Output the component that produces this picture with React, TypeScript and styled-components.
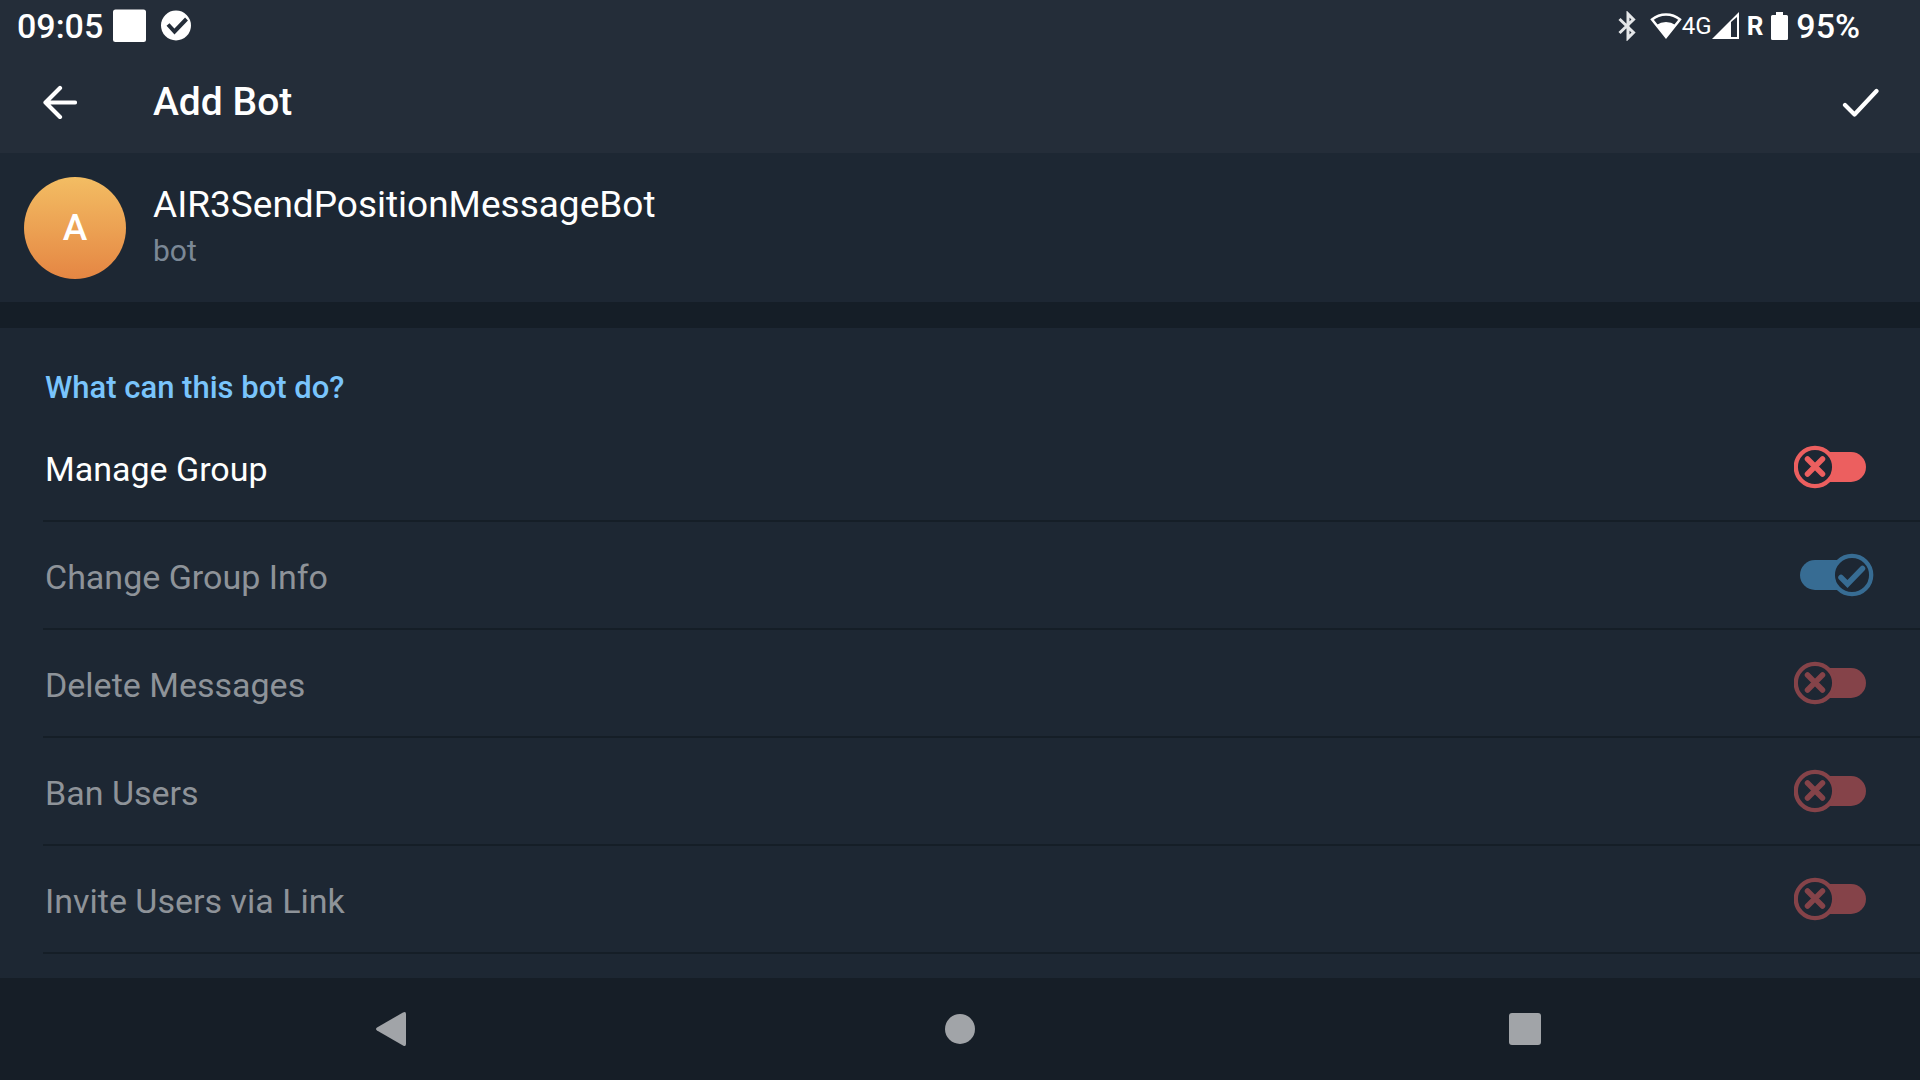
import React, { useState } from "react";
import styled, { createGlobalStyle } from "styled-components";

const color = {
  bar: "#242d39",
  surface: "#1d2733",
  ground: "#151e27",
  nav: "#161e27",
  accent: "#79c4fc",
  muted: "#7b8896",
  on: "#376c93",
  off: "#ec5f5f",
  offDim: "#854349",
  navIcon: "#a1a4a8",
};

const GlobalStyle = createGlobalStyle`
  * { box-sizing: border-box; }
  body {
    margin: 0;
    background: ${color.surface};
    color: #fff;
    font-family: Roboto, "Noto Sans", sans-serif;
  }
  h1, h2, p, ul { margin: 0; padding: 0; }
  button { border: 0; padding: 0; background: none; color: inherit; font: inherit; }
  svg { display: block; flex: none; }
`;

const Page = styled.div`
  display: flex;
  flex-direction: column;
  min-height: 100vh;
`;

const Header = styled.header`
  background: ${color.bar};
`;

const StatusBar = styled.div`
  display: flex;
  align-items: center;
  justify-content: space-between;
  height: 51px;
  padding: 0 60px 0 17px;
  font-size: 34px;
  font-weight: 500;
`;

const StatusGroup = styled.div<{ $gap: number }>`
  display: flex;
  align-items: center;
  gap: ${(p) => p.$gap}px;
`;

const Network = styled.span`
  font-size: 24px;
  font-weight: 400;
`;

const Roaming = styled.span`
  font-size: 26px;
  font-weight: 700;
`;

const Toolbar = styled.div`
  display: flex;
  align-items: center;
  height: 102px;
  padding: 0 36px;
`;

const IconButton = styled.button`
  display: grid;
  place-items: center;
  width: 48px;
  height: 48px;
`;

const Title = styled.h1`
  flex: 1;
  padding-left: 69px;
  font-size: 39px;
  line-height: 44px;
  font-weight: 500;
`;

const Profile = styled.section`
  display: flex;
  align-items: center;
  gap: 27px;
  height: 149px;
  padding: 0 24px;
`;

const Avatar = styled.div`
  display: grid;
  place-items: center;
  width: 102px;
  height: 102px;
  border-radius: 50%;
  background: linear-gradient(#f3bd63, #e58643);
  font-size: 37px;
  font-weight: 500;
`;

const Identity = styled.div`
  padding-bottom: 2px;
`;

const Name = styled.p`
  font-size: 37px;
  line-height: 48px;
`;

const Kind = styled.p`
  color: ${color.muted};
  font-size: 30px;
  line-height: 44px;
`;

const Separator = styled.div`
  height: 26px;
  background: ${color.ground};
`;

const Rights = styled.section`
  flex: 1;
  padding-top: 36px;
`;

const Heading = styled.h2`
  padding: 0 45px;
  height: 50px;
  color: ${color.accent};
  font-size: 31px;
  line-height: 48px;
  font-weight: 500;
`;

const List = styled.ul`
  list-style: none;
  padding-left: 43px;
`;

const Row = styled.li`
  border-bottom: 2px solid ${color.ground};
`;

const RowLabel = styled.label<{ $dim: boolean }>`
  display: flex;
  align-items: center;
  justify-content: space-between;
  height: 106px;
  padding: 0 46px 0 2px;
  color: ${(p) => (p.$dim ? "#8e9399" : "#fff")};
  font-size: 34px;
`;

const RowText = styled.span`
  padding-top: 4px;
`;

const SwitchBox = styled.span`
  display: grid;
  > * {
    grid-area: 1 / 1;
  }
`;

const SwitchInput = styled.input`
  width: 80px;
  height: 42px;
  margin: 0;
  opacity: 0;
`;

const NavBar = styled.nav`
  display: grid;
  grid-template-columns: repeat(3, 1fr);
  justify-items: center;
  align-items: center;
  height: 102px;
  padding: 0 112px;
  background: ${color.nav};
`;

function SwitchArt({ on, dim }: { on: boolean; dim: boolean }) {
  const c = on ? color.on : dim ? color.offDim : color.off;
  return (
    <svg width="80" height="44" viewBox="0 -0.5 80 44" fill="none" aria-hidden="true">
      <rect x={on ? 6 : 20} y="6.500" width="52" height="30" rx="15" fill={c} />
      <circle cx={on ? 58 : 21} cy="21.500" r="19.200" fill={color.surface} stroke={c} strokeWidth="4.300" />
      <path
        d={on ? "M47 24.500l6.500 6.500L68.500 15.500" : "M13.500 14l15 15M28.500 14L13.500 29"}
        stroke={c}
        strokeWidth="5.500"
        strokeLinecap="round"
        transform="translate(0 -0.5)"
      />
    </svg>
  );
}

type Right = { id: string; label: string; on: boolean; locked: boolean };

const initialRights: Right[] = [
  { id: "manage", label: "Manage Group", on: false, locked: false },
  { id: "info", label: "Change Group Info", on: true, locked: true },
  { id: "delete", label: "Delete Messages", on: false, locked: true },
  { id: "ban", label: "Ban Users", on: false, locked: true },
  { id: "invite", label: "Invite Users via Link", on: false, locked: true },
];

export default function App() {
  const [rights, setRights] = useState(initialRights);
  const toggle = (id: string) =>
    setRights((all) => all.map((r) => (r.id === id ? { ...r, on: !r.on } : r)));

  return (
    <Page>
      <GlobalStyle />
      <Header>
        <StatusBar>
          <StatusGroup $gap={10}>
            <span>09:05</span>
            <svg width="80" height="34" viewBox="0 0 80 34" aria-hidden="true">
              <rect y="0.500" width="33" height="32.500" rx="2.500" fill="#fff" />
              <circle cx="63" cy="16.500" r="15" fill="#fff" />
              <path d="M55 15.500l6.500 7 12-12.500" fill="none" stroke={color.bar} strokeWidth="4" />
            </svg>
          </StatusGroup>
          <StatusGroup $gap={8}>
            <StatusGroup $gap={0}>
              <svg width="64" height="30" viewBox="0 0 64 30" fill="none" aria-hidden="true">
                <path
                  d="M1.500 8l14 13.500L10 27V3l5.500 5.500-14 13.500"
                  stroke="#e4e6e8"
                  strokeWidth="3"
                />
                <path d="M34 8.500a22 22 0 0 1 28 0L48 26z" stroke="#fff" strokeWidth="2.500" />
                <path d="M38.500 14a17 17 0 0 1 19 0L48 26z" fill="#fff" />
              </svg>
              <Network>4G</Network>
              <svg width="27" height="28" viewBox="0 0 27 28" aria-hidden="true">
                <path d="M0 27L27 0v27zM19 10v15H25V5z" fill="#fff" fillRule="evenodd" />
              </svg>
            </StatusGroup>
            <Roaming>R</Roaming>
            <svg width="17" height="28" viewBox="0 0 17 28" aria-hidden="true">
              <path
                d="M5 0h7v3h3.500q1.500 0 1.500 1.500v22q0 1.500-1.500 1.500h-14q-1.500 0-1.500-1.500v-22q0-1.500 1.500-1.500H5z"
                fill="#fff"
              />
            </svg>
            <span>95%</span>
          </StatusGroup>
        </StatusBar>
        <Toolbar>
          <IconButton type="button" aria-label="Back">
            <svg width="34" height="34" viewBox="0 0 34 34" fill="none" aria-hidden="true">
              <path
                d="M32 17.500H2.500M17 3L2.500 17.500 17 32"
                stroke="#fff"
                strokeWidth="4.200"
                strokeLinecap="round"
                strokeLinejoin="round"
              />
            </svg>
          </IconButton>
          <Title>Add Bot</Title>
          <IconButton type="button" aria-label="Done">
            <svg width="38" height="30" viewBox="0 0 38 30" fill="none" aria-hidden="true">
              <path
                d="M4 18l9.500 9.500L35.500 4"
                stroke="#fff"
                strokeWidth="4.200"
                strokeLinecap="round"
                strokeLinejoin="round"
              />
            </svg>
          </IconButton>
        </Toolbar>
      </Header>

      <Profile>
        <Avatar>A</Avatar>
        <Identity>
          <Name>AIR3SendPositionMessageBot</Name>
          <Kind>bot</Kind>
        </Identity>
      </Profile>
      <Separator />

      <Rights>
        <Heading>What can this bot do?</Heading>
        <List>
          {rights.map((r) => (
            <Row key={r.id}>
              <RowLabel $dim={r.locked} htmlFor={r.id}>
                <RowText>{r.label}</RowText>
                <SwitchBox>
                  <SwitchArt on={r.on} dim={r.locked} />
                  <SwitchInput
                    id={r.id}
                    type="checkbox"
                    role="switch"
                    checked={r.on}
                    disabled={r.locked}
                    onChange={() => toggle(r.id)}
                  />
                </SwitchBox>
              </RowLabel>
            </Row>
          ))}
        </List>
      </Rights>

      <NavBar>
        <IconButton type="button" aria-label="System back">
          <svg width="40" height="36" viewBox="0 0 40 36" aria-hidden="true">
            <path
              d="M2 19.500q-2-1.500 0-3L28 1.500q3-1.500 3 1.500v30q0 3-3 1.500z"
              fill={color.navIcon}
            />
          </svg>
        </IconButton>
        <IconButton type="button" aria-label="Home">
          <svg width="30" height="30" viewBox="0 0 30 30" aria-hidden="true">
            <circle cx="15" cy="15" r="15" fill={color.navIcon} />
          </svg>
        </IconButton>
        <IconButton type="button" aria-label="Recent apps">
          <svg width="32" height="32" viewBox="0 0 32 32" aria-hidden="true">
            <rect width="32" height="32" rx="3" fill={color.navIcon} />
          </svg>
        </IconButton>
      </NavBar>
    </Page>
  );
}
